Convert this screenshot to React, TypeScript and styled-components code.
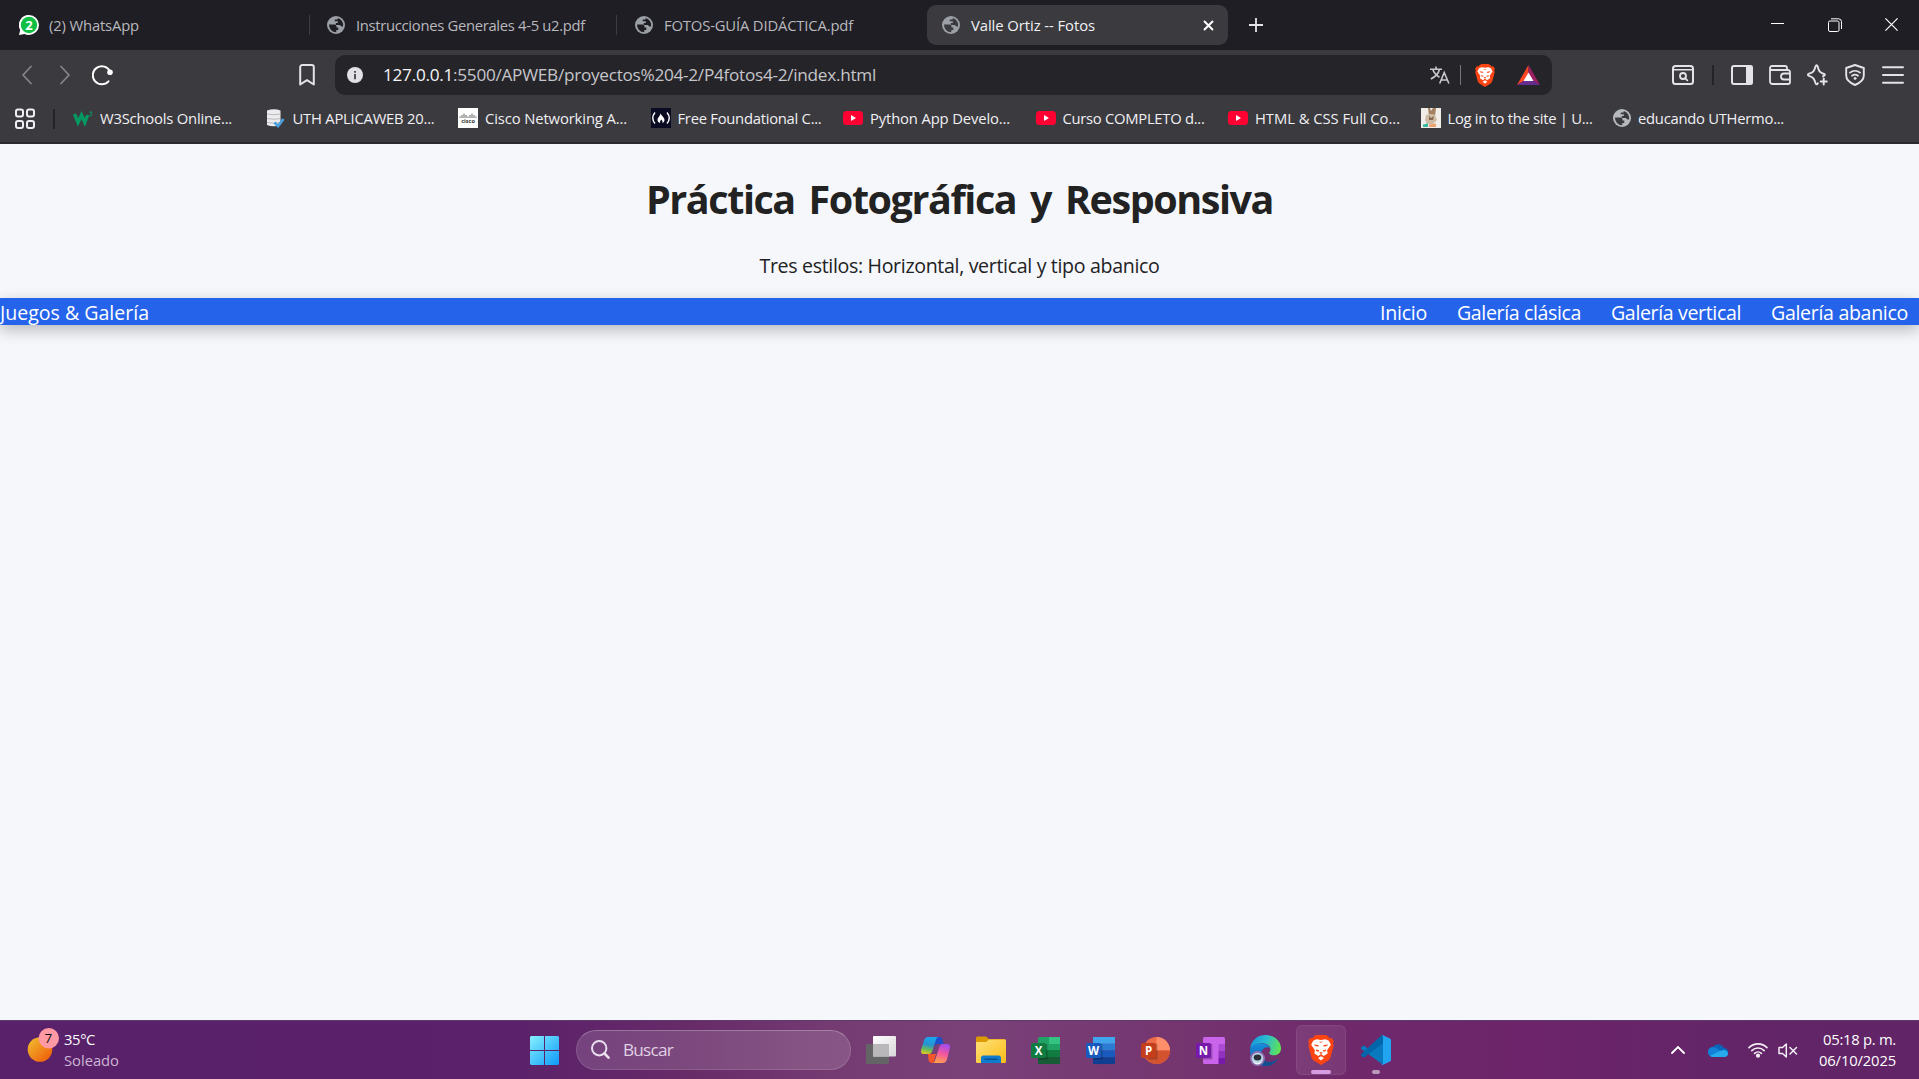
import React, { useLayoutEffect, useRef, useState } from "react";
import styled, { createGlobalStyle, css } from "styled-components";

const sans = `"Open Sans", "Noto Sans", sans-serif`;

const Global = createGlobalStyle`
  * { box-sizing: border-box; }
  html, body { margin: 0; height: 100%; overflow: hidden; }
  body { font-family: ${sans}; }
  svg { display: block; flex: none; }
`;

const Screen = styled.div`
  width: 1919px;
  height: 1079px;
  display: flex;
  flex-direction: column;
  background: #f5f7fb;
`;

/* A single line of text whose tracking adapts to the width it is given. */
const Line = styled.span<{ $w: number; $size: number; $color?: string; $bold?: boolean }>`
  display: block;
  flex: none;
  width: ${(p) => p.$w}px;
  font-size: ${(p) => p.$size}px;
  line-height: 1.36;
  font-weight: ${(p) => (p.$bold ? 700 : 400)};
  word-spacing: ${(p) => (p.$bold ? 5 : 0)}px;
  color: ${(p) => p.$color || "inherit"};
  white-space: nowrap;
`;

type FitProps = { w: number; size: number; color?: string; bold?: boolean; children: React.ReactNode };

function Fit({ w, size, color, bold, children }: FitProps) {
  const ref = useRef<HTMLSpanElement>(null);
  const [spacing, setSpacing] = useState(0);
  useLayoutEffect(() => {
    const el = ref.current;
    if (!el) return;
    const n = (el.textContent || "").length;
    const natural = el.getBoundingClientRect().width;
    setSpacing((w - natural) / n);
  }, [w]);
  return (
    <Line $w={w} $size={size} $color={color} $bold={bold}>
      <span ref={ref} style={{ letterSpacing: spacing }}>{children}</span>
    </Line>
  );
}

/* ---------- Tab strip ---------- */

const TabStrip = styled.div`
  height: 50px;
  display: flex;
  align-items: center;
  background: #1f1e24;
  padding-bottom: 10px;
  padding-top: 10px;
`;

const Tab = styled.div<{ $w: number; $pad: number; $gap: number; $divided?: boolean; $active?: boolean }>`
  width: ${(p) => p.$w}px;
  height: 20px;
  flex: none;
  display: flex;
  align-items: center;
  gap: ${(p) => p.$gap}px;
  padding-left: ${(p) => p.$pad}px;
  color: #b9b8be;
  ${(p) => p.$divided && css`border-right: 1px solid #3d3c42;`}
  ${(p) => p.$active && css`
    height: 40px;
    border-radius: 9px;
    background: #3b3a3f;
    color: #f2f2f4;
  `}
`;

const TabClose = styled.div`
  margin-left: auto;
  margin-right: 14px;
`;

const NewTab = styled.div`
  width: 56px;
  display: flex;
  justify-content: center;
`;

const WindowButtons = styled.div`
  margin-left: auto;
  display: flex;
`;

const WindowButton = styled.div`
  width: 57px;
  display: flex;
  justify-content: center;
  &:last-child { width: 56px; }
`;

/* ---------- Toolbar ---------- */

const Toolbar = styled.div`
  height: 50px;
  display: flex;
  align-items: center;
  background: #3b3a3f;
  color: #e4e3e8;
`;

const Cell = styled.div<{ $w?: number; $dim?: boolean }>`
  width: ${(p) => p.$w || 38}px;
  flex: none;
  display: flex;
  justify-content: center;
  color: ${(p) => (p.$dim ? "#85848a" : "inherit")};
`;

const NavButtons = styled.div`
  width: 335px;
  flex: none;
  display: flex;
  align-items: center;
  padding-left: 8px;
`;

const SaveCell = styled(Cell)`
  margin-left: 166px;
`;

const AddressBar = styled.div`
  width: 1217px;
  height: 40px;
  flex: none;
  display: flex;
  align-items: center;
  border-radius: 10px;
  background: #252429;
  padding: 0 12px 0 12px;
`;

const Url = styled.div`
  margin-left: 20px;
  color: #c6c5ca;
  b { font-weight: 400; color: #f5f5f7; }
`;

const AddressActions = styled.div`
  margin-left: auto;
  display: flex;
  align-items: center;
`;

const Rule = styled.div<{ $color: string; $w?: number; $l: number; $r: number }>`
  width: ${(p) => p.$w || 1}px;
  height: 20px;
  flex: none;
  background: ${(p) => p.$color};
  margin: 0 ${(p) => p.$r}px 0 ${(p) => p.$l}px;
`;

const Extensions = styled.div`
  margin-left: auto;
  display: flex;
  align-items: center;
  padding-right: 7px;
`;

const Bookmarks = styled.div`
  height: 44px;
  display: flex;
  align-items: center;
  background: #3b3a3f;
  border-bottom: 2px solid #2b2a30;
  padding: 0 0 5px 15px;
  color: #f0eff3;
`;

const BookmarkList = styled.div`
  display: grid;
  grid-template-columns: repeat(9, 192.5px);
`;

const Bookmark = styled.div`
  display: flex;
  align-items: center;
  gap: 7px;
`;

/* ---------- Page ---------- */

const Page = styled.main`
  flex: 1;
  display: flex;
  flex-direction: column;
  background: #f5f7fb;
  color: #222;
`;

const Header = styled.header`
  height: 154px;
  display: flex;
  flex-direction: column;
  align-items: center;
  padding-top: 29px;
  gap: 26px;
`;

const NavBar = styled.nav`
  height: 27px;
  display: flex;
  justify-content: space-between;
  align-items: center;
  padding-right: 11px;
  padding-top: 3px;
  background: #2563eb;
  color: #fff;
  box-shadow: 0 5px 15px rgba(0, 0, 0, 0.25);
`;

const NavLinks = styled.div`
  display: flex;
  gap: 30px;
`;

/* ---------- Taskbar ---------- */

const Taskbar = styled.footer`
  height: 59px;
  flex: none;
  display: flex;
  align-items: center;
  border-top: 1px solid #5d3b6c;
  background: linear-gradient(90deg, #58216a 0%, #5b216a 27%, #672b68 36%, #743a72 43%, #7a4179 50%, #753670 61%, #6f296b 70%, #6d246a 80%, #632568 90%, #602467 100%);
  color: #fff;
`;

const Weather = styled.div`
  width: 530px;
  flex: none;
  display: flex;
  align-items: center;
  padding-left: 27px;
  gap: 4px;
`;

const Stack = styled.div<{ $end?: boolean }>`
  display: flex;
  flex-direction: column;
  align-items: ${(p) => (p.$end ? "flex-end" : "flex-start")};
  padding-bottom: 1px;
`;

const SearchBox = styled.div`
  width: 275px;
  height: 40px;
  margin-left: 17px;
  margin-right: 2px;
  flex: none;
  display: flex;
  align-items: center;
  gap: 12px;
  padding-left: 14px;
  border-radius: 20px;
  border: 1px solid rgba(255, 255, 255, 0.12);
  border-top-color: rgba(255, 255, 255, 0.25);
  background: rgba(255, 255, 255, 0.14);
`;

const TaskButton = styled.div<{ $active?: boolean }>`
  width: 50px;
  height: 50px;
  margin: 0 2.5px;
  flex: none;
  display: grid;
  grid-template-rows: 40px 4px;
  justify-items: center;
  align-items: center;
  padding-top: 5px;
  border-radius: 6px;
  ${(p) => p.$active && css`
    background: rgba(255, 255, 255, 0.08);
    box-shadow: inset 0 0 0 1px rgba(255, 255, 255, 0.07);
  `}
`;

const Indicator = styled.div<{ $w: number; $color: string }>`
  width: ${(p) => p.$w}px;
  height: 4px;
  border-radius: 2px;
  background: ${(p) => p.$color};
`;

const Tray = styled.div`
  margin-left: auto;
  display: flex;
  align-items: center;
  padding-right: 23px;
`;

/* ---------- Icons ---------- */

const Globe = ({ color = "#9aa0a6", hole = "#1f1e24" }) => (
  <svg width="18" height="18" viewBox="0 0 18 18">
    <circle cx="9" cy="9" r="9" fill={color} />
    <path d="M2 8.500h5.500c1.200 0 2 .8 2 2v1h1.800v2.500h-2v2.200A7.200 7.200 0 0 1 2 8.500zM10.800 2.100A7.200 7.200 0 0 1 16 10.600h-1.500L12.700 9H8.800V7h2V5.200H7.500L8 3.600l2.600-.2z" fill={hole} />
  </svg>
);

const WhatsApp = () => (
  <svg width="20" height="20" viewBox="0 0 20 20">
    <path d="M10 0a10 10 0 0 1 0 20c-1.700 0-3.200-.4-4.600-1.100L0 20l1.200-5A10 10 0 0 1 10 0z" fill="#fff" />
    <circle cx="10" cy="10" r="8.200" fill="#12bf45" />
    <text x="10" y="14.700" fontSize="13" fontWeight="700" fontFamily="Open Sans, sans-serif" textAnchor="middle" fill="#fff">2</text>
  </svg>
);

const Chevron = ({ flip = false }) => (
  <svg width="12" height="20" viewBox="0 0 12 20" fill="none" stroke="currentColor" strokeWidth="1.800" strokeLinecap="round" strokeLinejoin="round">
    <path d={flip ? "M2 1.500l8 8.500-8 8.500" : "M10 1.500L2 10l8 8.500"} />
  </svg>
);

const Reload = () => (
  <svg width="22" height="22" viewBox="0 0 22 22" fill="none">
    <path d="M16.500 17.300A9 9 0 1 1 18 7.500" stroke="#fff" strokeWidth="2" strokeLinecap="round" />
    <circle cx="18" cy="8.300" r="2.800" fill="#fff" />
  </svg>
);

const SaveIcon = () => (
  <svg width="16" height="22" viewBox="0 0 16 22" fill="none">
    <path d="M1.200 3a2 2 0 0 1 2-2h9.600a2 2 0 0 1 2 2v17.500L8 16.200 1.200 20.500z" stroke="currentColor" strokeWidth="2" strokeLinejoin="round" />
  </svg>
);

const Info = () => (
  <svg width="16" height="16" viewBox="0 0 16 16">
    <circle cx="8" cy="8" r="8" fill="#e2e1e6" />
    <path d="M8 7v5.200M8 4v1.700" stroke="#3a393e" strokeWidth="1.700" />
  </svg>
);

const Translate = () => (
  <svg width="20" height="18" viewBox="0 0 20 18" fill="none" stroke="#c9c8cd" strokeWidth="1.600">
    <path d="M0 3.200h12M6 .5v2.700M9.500 3.200C8.500 7.500 4.800 11 .8 13M2.800 3.500C4 7 6.500 9.500 9.500 11.200M9.700 17.500L14.200 6.500l4.700 11M11.300 14h6" />
  </svg>
);

const Lion = ({ w, h }: { w: number; h: number }) => (
  <svg width={w} height={h} viewBox="0 0 24 28">
    <path d="M6 .8L8 0h8l2 .8L20 3l2-.2 2 3-.8 2.200.6 2-2.800 10.500c-.4 1.500-1.200 2.500-2.500 3.500L12 28l-6.500-4C4.200 23 3.400 22 3 20.500L.2 10l.6-2L0 5.800l2-3L4 3z" fill="#fb4411" />
    <path d="M7.800 4l4.200.7L16.200 4l3.100 1.300 1.900 3.900-3.500 5 .5 3-3.700 2.500-2.500-1.900-2.500 1.900-3.700-2.500.5-3-3.500-5 1.900-3.900zM12 19.800l2.800 1.700L12 23.900l-2.800-2.400z" fill="#fff" />
    <path d="M5 8.800l4.500.5.400 1.500-2.700-.3zM19 8.800l-4.500.5-.4 1.500 2.700-.3zM7.500 13.600l2.800.7-.6 1.300-2.400-.6zM16.500 13.600l-2.800.7.6 1.300 2.400-.6zM9.800 6.300h4.400L12 7.200zM10.300 16.500L12 15.800l1.700.7-1.700 1.200z" fill="#fb4411" />
  </svg>
);

const Bat = () => (
  <svg width="23" height="20" viewBox="0 0 23 20">
    <path d="M11.500 0L0 20l11.500-7z" fill="#ff4724" />
    <path d="M11.500 0L23 20l-11.500-7z" fill="#9e1f63" />
    <path d="M0 20h23l-11.500-7z" fill="#662d91" />
    <path d="M11.500 7.500l5 8.500h-10z" fill="#fff" />
  </svg>
);

const stroke = { fill: "none", stroke: "currentColor", strokeWidth: 2, strokeLinejoin: "round" as const, strokeLinecap: "round" as const };

const SearchTabs = () => (
  <svg width="22" height="20" viewBox="0 0 22 20" {...stroke}>
    <rect x="1" y="1" width="20" height="18" rx="2.500" />
    <path d="M1 4.700h20" strokeWidth="1.600" />
    <circle cx="11" cy="11" r="3" strokeWidth="1.800" />
    <path d="M13.300 13.300l2 2" strokeWidth="1.800" />
  </svg>
);

const SidePanel = () => (
  <svg width="22" height="20" viewBox="0 0 22 20" {...stroke}>
    <rect x="1" y="1" width="20" height="18" rx="2" />
    <rect x="16" y="1.500" width="4.500" height="17" fill="currentColor" />
  </svg>
);

const Wallet = () => (
  <svg width="22" height="20" viewBox="0 0 22 20" {...stroke} strokeWidth={1.800}>
    <path d="M1 4v12.500a2.500 2.500 0 0 0 2.500 2.500H19a2 2 0 0 0 2-2V7a2 2 0 0 0-2-2H3a2 2 0 0 1 0-4h13a2 2 0 0 1 2 2v2M21 8.500h-6a3 3 0 0 0-3 3 3 3 0 0 0 3 3h6" />
  </svg>
);

const Sparkle = () => (
  <svg width="22" height="22" viewBox="0 0 22 22" {...stroke} strokeWidth={1.900}>
    <path d="M16 12.300c2-.9 2.500-1.700 1-2.300-4.500-1.500-5.200-3-6.300-7.500-.6-1.700-1.600-1.700-2.200 0C7.300 7 6.200 8.500 2 9.700c-1.500.6-1.500 1.600 0 2.200 4.200 1.300 5.300 2.800 6.500 7.200.5 1.500 1.500 1.700 2.300.2" />
    <path d="M16.700 14.500v6M13.700 17.500h6" strokeWidth="2" />
  </svg>
);

const ShieldWifi = () => (
  <svg width="20" height="22" viewBox="0 0 20 22" {...stroke} strokeWidth={1.900}>
    <path d="M10 1l8.800 3v7.500c0 4.200-4 7.500-8.800 9.500-4.800-2-8.800-5.300-8.800-9.500V4z" />
    <path d="M5 8.600a8 8 0 0 1 10 0M7 11.700a5 5 0 0 1 6 0" strokeWidth="1.800" />
    <circle cx="10" cy="14.400" r="1" fill="currentColor" strokeWidth="1" />
  </svg>
);

const Menu = () => (
  <svg width="22" height="18" viewBox="0 0 22 18" {...stroke}>
    <path d="M1 1.200h20M1 9h20M1 16.800h20" />
  </svg>
);

const AppsGrid = () => (
  <svg width="20" height="22" viewBox="0 0 20 22" {...stroke}>
    <rect x="1" y="1.500" width="7" height="7" rx="2" />
    <rect x="12" y="1.500" width="7" height="7" rx="2" />
    <rect x="1" y="13" width="7" height="7" rx="2" />
    <rect x="12" y="13" width="7" height="7" rx="2" />
  </svg>
);

const W3 = () => (
  <svg width="20" height="20" viewBox="0 0 20 20" fill="none" stroke="#059862">
    <path d="M1.500 6l3.500 8.500L8.500 7l3.300 7.500L14.700 7" strokeWidth="3.400" />
    <path d="M16.500 4h2.300l-1.400 1.600c1.900 0 1.900 2.300 0 2.300l-1.200-.3" strokeWidth="1" />
  </svg>
);

const Database = () => (
  <svg width="20" height="20" viewBox="0 0 20 20">
    <path d="M1 2.500q7-2.500 13.500 0v14.500q-7 2.500-13.500 0z" fill="#ececee" />
    <path d="M1 6q7 1.500 13.500 0M1 10.500q7 1.500 13.500 0M1 14.500q7 1.500 13.500 0" stroke="#b9b9be" fill="none" />
    <path d="M8.500 14.500l3.500 3.500 5.500-7" stroke="#4aa0dc" strokeWidth="2.800" fill="none" />
  </svg>
);

const Cisco = () => (
  <svg width="20" height="20" viewBox="0 0 20 20">
    <rect width="20" height="20" fill="#fff" />
    <path d="M2 8.500v1.500M4 7v3M6 5.500V10M8 7v3M10 8.500V10M12 7v3M14 5.500V10M16 7v3M18 8.500V10" stroke="#555" strokeWidth=".9" />
    <text x="10" y="15.300" fontSize="5.600" fontWeight="700" fontFamily="Open Sans, sans-serif" textAnchor="middle" fill="#333">cisco</text>
  </svg>
);

const Fcc = () => (
  <svg width="20" height="20" viewBox="0 0 20 20">
    <rect width="20" height="20" fill="#0a0a23" />
    <path d="M4 4.500q-4.500 5.500 0 11M16 4.500q4.500 5.500 0 11" stroke="#fff" strokeWidth="1.400" fill="none" />
    <path d="M9.500 5c.3 2.500 4 4 4 7 0 1.500-1 2.500-2.200 3 .7-1.500-.2-2.500-1.100-3.500-.5 1.200-1.900 2-.9 3.500C7.500 14.500 6.500 13.500 6.500 12c0-2.500 3-4 3-7z" fill="#fff" />
  </svg>
);

const YouTube = () => (
  <svg width="20" height="20" viewBox="0 0 20 20">
    <rect y="3" width="20" height="14" rx="3.500" fill="#ff0033" />
    <path d="M8 7l5 3-5 3z" fill="#fff" />
  </svg>
);

const Owl = () => (
  <svg width="20" height="20" viewBox="0 0 20 20">
    <rect width="20" height="20" fill="#f1eeea" />
    <path d="M7 0h2l1 3 2-3h3l-1 8H8z" fill="#a3805f" />
    <path d="M5 7q5-2 9 0l2 5-4 4H6l-2-4z" fill="#cfbca6" />
    <path d="M8 8l2 2 3-2-1 4H8z" fill="#86694f" />
    <path d="M2 16.500l5-1V19H2z" fill="#35b8a0" />
    <path d="M8 16.500l7-1V19H8z" fill="#f0a06c" />
  </svg>
);

const Sun = () => (
  <svg width="33" height="47" viewBox="0 0 33 47">
    <defs>
      <linearGradient id="sun" x1="0" y1="0" x2="1" y2="1">
        <stop offset=".1" stopColor="#f0b62d" />
        <stop offset=".8" stopColor="#f0690f" />
      </linearGradient>
    </defs>
    <circle cx="13" cy="22.500" r="12.300" fill="url(#sun)" />
    <circle cx="21.800" cy="11.200" r="10.200" fill="#ff99a4" />
    <text x="21.300" y="16" fontSize="13.500" fontFamily="Open Sans, sans-serif" textAnchor="middle" fill="#111">7</text>
  </svg>
);

const Windows = () => (
  <svg width="29" height="29" viewBox="0 0 29 29">
    <defs>
      <linearGradient id="win" x1="0" y1="0" x2="29" y2="29" gradientUnits="userSpaceOnUse">
        <stop stopColor="#86f1fd" />
        <stop offset="1" stopColor="#0d99fb" />
      </linearGradient>
    </defs>
    <path d="M1 0h13v14H0V1zM15 0h13l1 1v13H15zM0 15h14v14H1l-1-1zM15 15h14v13l-1 1H15z" fill="url(#win)" />
  </svg>
);

const Lens = () => (
  <svg width="20" height="20" viewBox="0 0 20 20" fill="none" stroke="#eadff0" strokeWidth="2" strokeLinecap="round">
    <circle cx="8.200" cy="8.200" r="7.200" />
    <path d="M13.500 13.500l4 4.200" strokeWidth="2.600" />
  </svg>
);

const TaskView = () => (
  <svg width="30" height="29" viewBox="0 0 30 29">
    <defs><linearGradient id="tv" x1="0" y1="0" x2="1" y2="1"><stop stopColor="#fff" /><stop offset="1" stopColor="#dad6d9" /></linearGradient></defs>
    <rect y="8" width="23" height="20" rx="1" fill="#646365" />
    <rect x="7" y="0" width="23" height="20.500" rx="1" fill="url(#tv)" />
    <rect x="7" y="8" width="16" height="12.500" fill="#b9b7b9" />
  </svg>
);

const Copilot = () => (
  <svg width="29" height="26" viewBox="0 0 29 26">
    <defs>
      <linearGradient id="cpa" x1=".5" y1="0" x2=".3" y2="1"><stop stopColor="#18a8ef" /><stop offset=".45" stopColor="#2793cf" /><stop offset=".75" stopColor="#6bbd57" /><stop offset="1" stopColor="#e4c822" /></linearGradient>
      <linearGradient id="cpb" x1=".7" y1="0" x2=".4" y2="1"><stop stopColor="#a04bf0" /><stop offset=".5" stopColor="#f2579d" /><stop offset="1" stopColor="#ffa04f" /></linearGradient>
    </defs>
    <path d="M14 0h4c2 0 3 1 3.500 3l1 4h-5c-2 0-3 1-3.500 3z" fill="#1c4fcc" />
    <path d="M7 17h8l-2.500 9H11c-2 0-3-1-3.500-3z" fill="#f4562c" />
    <path d="M7.500 0H18c-1.800 0-2.500 1-3 2.600L11.300 14c-.6 2-1.800 3-3.800 3H3c-2.800 0-3.500-2-2.700-5L3 3.500C3.800 1 5.200 0 7.500 0z" fill="url(#cpa)" />
    <path d="M21.500 26H11c1.800 0 2.500-1 3-2.600L17.700 12c.6-2 1.800-5 3.800-5H26c2.800 0 3.500 2 2.700 5L26 22.500c-.8 2.500-2.200 3.500-4.500 3.500z" fill="url(#cpb)" />
  </svg>
);

const Folder = () => (
  <svg width="30" height="28" viewBox="0 0 30 28">
    <defs><linearGradient id="fo" x1="0" y1="0" x2="1" y2="1"><stop stopColor="#ffe17a" /><stop offset="1" stopColor="#fbbd17" /></linearGradient></defs>
    <path d="M0 2a1.500 1.500 0 0 1 1.500-1.500H10L13 3h15.500A1.500 1.500 0 0 1 30 4.500V8H0z" fill="#dd9a05" />
    <path d="M0 6h10l3-2.500h15.500A1.500 1.500 0 0 1 30 5v20.500a1.500 1.500 0 0 1-1.500 1.500h-27A1.500 1.500 0 0 1 0 25.500z" fill="url(#fo)" />
    <path d="M5 27v-5a2.500 2.500 0 0 1 2.500-2.500h15A2.500 2.500 0 0 1 25 22v5z" fill="#0f7bcc" />
    <path d="M8.500 23.200h13" stroke="#0a4f91" strokeWidth="1.400" />
  </svg>
);

type OfficeProps = { letter: string; badge: string; colors: string[]; kind: "grid" | "rows" | "pie" | "note" };

const Office = ({ letter, badge, colors: c, kind }: OfficeProps) => (
  <svg width="30" height="29" viewBox="0 0 30 29">
    {kind === "grid" && (
      <>
        <rect x="7" y="1" width="22" height="27" rx="1.500" fill={c[0]} />
        <rect x="18" y="1" width="11" height="7" fill={c[1]} />
        <rect x="18" y="8" width="11" height="7" fill={c[0]} />
        <rect x="7" y="14" width="22" height="7" fill={c[2]} />
        <rect x="7" y="21" width="22" height="7" fill={c[3]} />
      </>
    )}
    {kind === "rows" && c.map((f, i) => <rect key={f} x="7" y={1 + i * 6.75} width="22" height="6.800" fill={f} />)}
    {kind === "pie" && (
      <>
        <circle cx="15.500" cy="14.500" r="13.500" fill={c[0]} />
        <path d="M15.500 1A13.500 13.500 0 0 1 29 14.500H15.500z" fill={c[1]} />
        <path d="M29 14.500a13.500 13.500 0 0 1-27 0z" fill={c[2]} />
      </>
    )}
    {kind === "note" && (
      <>
        <rect x="7" y="1" width="22" height="27" rx="1.500" fill={c[0]} />
        <rect x="22.500" y="8" width="6.500" height="7" fill={c[1]} />
        <rect x="22.500" y="15" width="6.500" height="6.500" fill={c[2]} />
        <rect x="22.500" y="21.500" width="6.500" height="6.500" fill={c[3]} />
      </>
    )}
    <rect x="7" y="8" width="9.500" height="15.500" fill="#000" opacity=".22" />
    <rect x="0" y="7" width="15" height="15" rx="1.500" fill={badge} />
    <text x="7.500" y="18.800" fontSize="11.500" fontWeight="700" fontFamily="Open Sans, sans-serif" textAnchor="middle" fill="#fff">{letter}</text>
  </svg>
);

const Edge = () => (
  <svg width="31" height="31" viewBox="0 0 31 31">
    <defs>
      <linearGradient id="eda" x1="0" y1=".3" x2="1" y2=".5"><stop stopColor="#1696dc" /><stop offset=".5" stopColor="#2bbdd1" /><stop offset="1" stopColor="#5fe252" /></linearGradient>
      <linearGradient id="edb" x1="0" y1="0" x2="0" y2="1"><stop stopColor="#1691dd" /><stop offset="1" stopColor="#0c57a8" /></linearGradient>
    </defs>
    <path d="M15.500 0C24 0 31 6 31 13.500c0 4-3 6.800-7 6.800-3.500 0-5-1.200-4.700-2.700.2-.8 1.200-1.600 1.200-3.400 0-3.500-3.600-6-8.500-6C6 8.200 1 11 0 15 .5 6 7 0 15.500 0z" fill="url(#eda)" />
    <path d="M0 15c1-4.500 6-7 11-6.800 4.500.2 8 2 9 4.500-3-1.500-8 0-8.700 5.300-.7 5.500 4.200 11 11.700 8.500 2-.6 4-2 5-3C25.500 28.500 20 31 15.500 31 6.500 31-.5 23.500 0 15z" fill="url(#edb)" />
    <path d="M11.300 18c-.7 5.500 4.200 11 11.700 8.500 2-.6 3.500-1.500 5-3-3 5.500-8 7.500-12.500 7.500C11 29 7.500 22 11.300 18z" fill="#124f8f" />
    <circle cx="7.500" cy="23.500" r="7.500" fill="#8c6faf" />
    <circle cx="7.500" cy="23.500" r="5.800" fill="#b9d5e6" />
    <ellipse cx="7.500" cy="22.500" rx="3.800" ry="3" fill="#2a2f38" />
    <path d="M3 26.500q4.500 2.800 9 0-1.500 3-4.500 3t-4.500-3z" fill="#f0f5f8" />
  </svg>
);

const VsCode = () => (
  <svg width="30" height="30" viewBox="0 0 30 30">
    <path d="M22 .3L7.500 14 3.300 10.800a1.300 1.300 0 0 0-1.600.1L.4 12.200a1.300 1.300 0 0 0 0 1.900L22 29.700l1-8z" fill="#0879bf" />
    <path d="M22 .3v8L3.300 22.200a1.300 1.300 0 0 1-1.600-.1L.4 20.800a1.300 1.300 0 0 1 0-1.900L20 .8z" fill="#0065a9" />
    <path d="M22 .3l7 3.200c.6.300 1 .9 1 1.600v19.800c0 .7-.4 1.300-1 1.600l-7 3.200c-.8.300-1.600.1-2.200-.5 1 .7 2.200 0 2.200-1.100V1.900C22 .8 20.800.1 19.800.8 20.400.2 21.200 0 22 .3z" fill="#22a5f1" />
  </svg>
);

const OneDrive = () => (
  <svg width="20" height="14" viewBox="0 0 20 14">
    <path d="M5 4a6 6 0 0 1 10.500.8 4.600 4.600 0 0 1 .2 9.200H5A5 5 0 0 1 5 4z" fill="#0a64b8" />
    <path d="M0 9a5 5 0 0 1 8-4l10 6-2 3H5a5 5 0 0 1-5-5z" fill="#1380d8" />
    <path d="M2 13l11-5.500c3-1.500 7-.2 7 3 0 2-1.500 3.500-3.500 3.500H5a5 5 0 0 1-3-1z" fill="#27a9ee" />
  </svg>
);

const Wifi = () => (
  <svg width="20" height="16" viewBox="0 0 20 16" fill="none" stroke="#f4eef5" strokeWidth="1.600" strokeLinecap="round">
    <path d="M1 5.600a12.700 12.700 0 0 1 18 0M3.800 8.600a8.800 8.800 0 0 1 12.400 0M6.600 11.400a4.900 4.900 0 0 1 6.800 0" />
    <circle cx="10" cy="13.700" r="1.300" fill="#f4eef5" />
  </svg>
);

const Muted = () => (
  <svg width="20" height="15" viewBox="0 0 20 15" fill="none" stroke="#f4eef5" strokeWidth="1.500" strokeLinejoin="round" strokeLinecap="round">
    <path d="M8.300 1v13L4.500 10.500H1v-6h3.500zM12 4.500l6.500 6.500M18.500 4.500L12 11" />
  </svg>
);

const bookmarks = [
  { icon: <W3 />, text: "W3Schools Online...", w: 132 },
  { icon: <Database />, text: "UTH APLICAWEB 20...", w: 142 },
  { icon: <Cisco />, text: "Cisco Networking A...", w: 142 },
  { icon: <Fcc />, text: "Free Foundational C...", w: 144 },
  { icon: <YouTube />, text: "Python App Develo...", w: 140 },
  { icon: <YouTube />, text: "Curso COMPLETO d...", w: 142 },
  { icon: <YouTube />, text: "HTML & CSS Full Co...", w: 145 },
  { icon: <Owl />, text: "Log in to the site | U...", w: 145 },
  { icon: <Globe color="#b5b8bd" hole="#3b3a3f" />, text: "educando UTHermo...", w: 146 },
];

const apps = [
  { icon: <TaskView /> },
  { icon: <Copilot /> },
  { icon: <Folder /> },
  { icon: <Office letter="X" badge="#107c41" kind="grid" colors={["#21a366", "#33c481", "#107c41", "#185c37"]} /> },
  { icon: <Office letter="W" badge="#185abd" kind="rows" colors={["#41a5ee", "#2b7cd3", "#185abd", "#103f91"]} /> },
  { icon: <Office letter="P" badge="#c43e1c" kind="pie" colors={["#ed6c47", "#ff8f6b", "#d35230"]} /> },
  { icon: <Office letter="N" badge="#7719aa" kind="note" colors={["#ca64ea", "#ae4bd5", "#9332bf", "#7719aa"]} /> },
  { icon: <Edge /> },
  { icon: <Lion w={26} h={30} />, mark: { w: 20, color: "#d79de3" }, active: true },
  { icon: <VsCode />, mark: { w: 8, color: "#b99cbb" } },
];

export default function App() {
  return (
    <Screen>
      <Global />
      <TabStrip>
        <Tab $w={310} $pad={19} $gap={10} $divided><WhatsApp /><Fit w={90} size={14.8}>(2) WhatsApp</Fit></Tab>
        <Tab $w={307} $pad={17} $gap={11} $divided><Globe /><Fit w={229} size={14.8}>Instrucciones Generales 4-5 u2.pdf</Fit></Tab>
        <Tab $w={310} $pad={18} $gap={11}><Globe /><Fit w={189} size={14.8}>FOTOS-GUÍA DIDÁCTICA.pdf</Fit></Tab>
        <Tab $w={301} $pad={15} $gap={11} $active>
          <Globe hole="#3b3a3f" /><Fit w={124} size={14.8}>Valle Ortiz -- Fotos</Fit>
          <TabClose>
            <svg width="11" height="11" viewBox="0 0 11 11" stroke="#fff" strokeWidth="2"><path d="M1 1l9 9M10 1l-9 9" /></svg>
          </TabClose>
        </Tab>
        <NewTab>
          <svg width="14" height="14" viewBox="0 0 14 14" stroke="#e4e3e8" strokeWidth="1.800"><path d="M7 0v14M0 7h14" /></svg>
        </NewTab>
        <WindowButtons>
          <WindowButton><svg width="13" height="14" viewBox="0 0 13 14"><path d="M0 5.500h13" stroke="#fff" /></svg></WindowButton>
          <WindowButton>
            <svg width="14" height="14" viewBox="0 0 14 14" fill="none" stroke="#fff"><rect x=".5" y="3" width="10.500" height="10.500" rx="1.500" /><path d="M3 .8h7.500a3 3 0 0 1 3 3V11" /></svg>
          </WindowButton>
          <WindowButton><svg width="13" height="13" viewBox="0 0 13 13" stroke="#fff" strokeWidth="1.200"><path d="M.4.400l12.200 12.200M12.600.400L.4 12.600" /></svg></WindowButton>
        </WindowButtons>
      </TabStrip>

      <Toolbar>
        <NavButtons>
          <Cell $dim><Chevron /></Cell>
          <Cell $dim><Chevron flip /></Cell>
          <Cell><Reload /></Cell>
          <SaveCell><SaveIcon /></SaveCell>
        </NavButtons>
        <AddressBar>
          <Info />
          <Url><Fit w={493} size={17.2}><b>127.0.0.1</b>:5500/APWEB/proyectos%204-2/P4fotos4-2/index.html</Fit></Url>
          <AddressActions>
            <Translate />
            <Rule $color="#77767c" $l={10} $r={14} />
            <Lion w={20} h={23} />
            <Cell $w={22} />
            <Bat />
          </AddressActions>
        </AddressBar>
        <Extensions>
          <Cell><SearchTabs /></Cell>
          <Rule $color="#242328" $w={2} $l={10} $r={9} />
          <Cell><SidePanel /></Cell>
          <Cell><Wallet /></Cell>
          <Cell $w={37}><Sparkle /></Cell>
          <Cell><ShieldWifi /></Cell>
          <Cell><Menu /></Cell>
        </Extensions>
      </Toolbar>

      <Bookmarks>
        <AppsGrid />
        <Rule $color="#242328" $w={2} $l={18} $r={18} />
        <BookmarkList>
          {bookmarks.map((b) => (
            <Bookmark key={b.text}>{b.icon}<Fit w={b.w} size={14.8}>{b.text}</Fit></Bookmark>
          ))}
        </BookmarkList>
      </Bookmarks>

      <Page>
        <Header>
          <Fit w={627} size={39.5} bold>Práctica Fotográfica y Responsiva</Fit>
          <Fit w={400} size={19.6}>Tres estilos: Horizontal, vertical y tipo abanico</Fit>
        </Header>
        <NavBar>
          <Fit w={149} size={19.6}>Juegos &amp; Galería</Fit>
          <NavLinks>
            <Fit w={47} size={19.6}>Inicio</Fit>
            <Fit w={124} size={19.6}>Galería clásica</Fit>
            <Fit w={130} size={19.6}>Galería vertical</Fit>
            <Fit w={137} size={19.6}>Galería abanico</Fit>
          </NavLinks>
        </NavBar>
      </Page>

      <Taskbar>
        <Weather>
          <Sun />
          <Stack>
            <Fit w={31} size={14.8}>35°C</Fit>
            <Fit w={55} size={14.8} color="#cdb5d4">Soleado</Fit>
          </Stack>
        </Weather>
        <Windows />
        <SearchBox><Lens /><Fit w={50} size={17.2} color="#e0d0e4">Buscar</Fit></SearchBox>
        {apps.map((a, i) => (
          <TaskButton key={i} $active={a.active}>
            {a.icon}
            {a.mark && <Indicator $w={a.mark.w} $color={a.mark.color} />}
          </TaskButton>
        ))}
        <Tray>
          <svg width="14" height="8" viewBox="0 0 14 8" fill="none" stroke="#fff" strokeWidth="1.800" strokeLinecap="round"><path d="M1 7l6-6 6 6" /></svg>
          <Cell $w={23} />
          <OneDrive />
          <Cell $w={20} />
          <Wifi />
          <Cell $w={10} />
          <Muted />
          <Cell $w={21} />
          <Stack $end>
            <Fit w={73} size={14.8}>05:18 p. m.</Fit>
            <Fit w={77} size={14.8}>06/10/2025</Fit>
          </Stack>
        </Tray>
      </Taskbar>
    </Screen>
  );
}
